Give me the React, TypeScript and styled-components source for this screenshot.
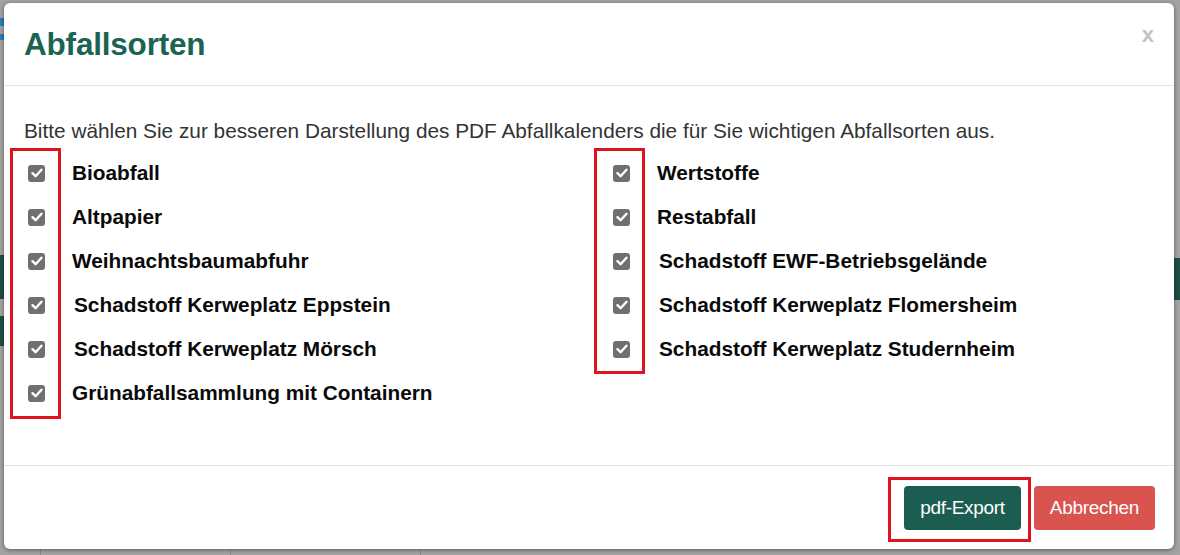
import React from "react";
import styled, { createGlobalStyle } from "styled-components";

const Global = createGlobalStyle`
  html, body { margin: 0; padding: 0; }
  body {
    width: 1180px;
    height: 555px;
    overflow: hidden;
    background: #a3a3a3;
    font-family: "Liberation Sans", Arial, sans-serif;
  }
`;

const Backdrop = styled.div`
  position: relative;
  width: 1180px;
  height: 555px;
  padding: 3px 6px 6px 4px;
  box-sizing: border-box;
`;

const BgBit = styled.div<{ $x: number; $y: number; $w: number; $h: number; $c: string }>`
  position: absolute;
  left: ${(p) => p.$x}px;
  top: ${(p) => p.$y}px;
  width: ${(p) => p.$w}px;
  height: ${(p) => p.$h}px;
  background: ${(p) => p.$c};
`;

const Modal = styled.div`
  position: relative;
  height: 546px;
  background: #fff;
  border-radius: 6px;
  box-shadow: 0 1px 4px rgba(0, 0, 0, 0.45);
  display: flex;
  flex-direction: column;
`;

const Header = styled.div`
  height: 83px;
  border-bottom: 1px solid #e3e3e3;
  display: flex;
  align-items: center;
  justify-content: space-between;
  padding: 0 20px 0 20px;
  box-sizing: border-box;
  flex: none;
`;

const Title = styled.h2`
  margin: 0;
  font-size: 31.5px;
  font-weight: bold;
  color: #1b6454;
  letter-spacing: -0.2px;
`;

const Close = styled.span`
  font-size: 22px;
  font-weight: bold;
  color: #c2c2c2;
  margin-top: -18px;
`;

const Body = styled.div`
  flex: 1;
  padding: 33px 20px 0 20px;
  box-sizing: border-box;
  border-bottom: 1px solid #e3e3e3;
`;

const Intro = styled.p`
  margin: 0 0 8px 0;
  font-size: 20.8px;
  line-height: 24px;
  color: #333;
`;

const Columns = styled.div`
  display: grid;
  grid-template-columns: 585px 1fr;
`;

const Column = styled.div`
  display: flex;
  flex-direction: column;
`;

const Row = styled.label`
  height: 44px;
  display: flex;
  align-items: center;
`;

const Box = styled.span`
  width: 17px;
  height: 17px;
  border-radius: 3px;
  background: #707070;
  display: flex;
  align-items: center;
  justify-content: center;
  flex: none;
  margin-left: 4px;
`;

const Label = styled.span<{ $shift?: boolean }>`
  margin-left: ${(p) => (p.$shift ? 29 : 27)}px;
  font-size: 20.8px;
  font-weight: bold;
  color: #0a0a0a;
`;

const Footer = styled.div`
  height: 83px;
  flex: none;
  display: flex;
  align-items: center;
  justify-content: flex-end;
  gap: 13px;
  padding: 0 19px 0 0;
  box-sizing: border-box;
`;

const Button = styled.button<{ $variant: "primary" | "danger" }>`
  height: 44px;
  border: none;
  border-radius: 4px;
  padding: 0 16px;
  font-family: "Liberation Sans", Arial, sans-serif;
  font-size: 19px;
  color: #fff;
  letter-spacing: -0.3px;
  background: ${(p) => (p.$variant === "primary" ? "#1b5e51" : "#d9534f")};
  margin-top: 1px;
`;

const Highlight = styled.div<{ $x: number; $y: number; $w: number; $h: number }>`
  position: absolute;
  left: ${(p) => p.$x}px;
  top: ${(p) => p.$y}px;
  width: ${(p) => p.$w}px;
  height: ${(p) => p.$h}px;
  border: 3px solid #e0141f;
  box-sizing: border-box;
  pointer-events: none;
`;

const Check = () => (
  <svg width="12" height="10" viewBox="0 0 12 10">
    <path d="M1.5 5.2 L4.6 8.2 L10.5 1.8" fill="none" stroke="#fff" strokeWidth="2.4" strokeLinecap="round" strokeLinejoin="round" />
  </svg>
);

const left = [
  { t: "Bioabfall" },
  { t: "Altpapier" },
  { t: "Weihnachtsbaumabfuhr" },
  { t: "Schadstoff Kerweplatz Eppstein", s: true },
  { t: "Schadstoff Kerweplatz Mörsch", s: true },
  { t: "Grünabfallsammlung mit Containern" },
];
const right = [
  { t: "Wertstoffe" },
  { t: "Restabfall" },
  { t: "Schadstoff EWF-Betriebsgelände", s: true },
  { t: "Schadstoff Kerweplatz Flomersheim", s: true },
  { t: "Schadstoff Kerweplatz Studernheim", s: true },
];

const Item = ({ t, s }: { t: string; s?: boolean }) => (
  <Row>
    <Box>
      <Check />
    </Box>
    <Label $shift={s}>{t}</Label>
  </Row>
);

export default function App() {
  return (
    <>
      <Global />
      <Backdrop>
        <BgBit $x={0} $y={18} $w={4} $h={8} $c="#2a7fc0" />
        <BgBit $x={0} $y={34} $w={4} $h={6} $c="#2a7fc0" />
        <BgBit $x={0} $y={255} $w={4} $h={44} $c="#1d4f45" />
        <BgBit $x={0} $y={316} $w={4} $h={30} $c="#1d4f45" />
        <BgBit $x={1174} $y={258} $w={6} $h={42} $c="#1d4f45" />
        <BgBit $x={40} $y={549} $w={1} $h={6} $c="#8a8a8a" />
        <BgBit $x={230} $y={549} $w={1} $h={6} $c="#8a8a8a" />
        <BgBit $x={420} $y={549} $w={1} $h={6} $c="#8a8a8a" />
        <Modal>
          <Header>
            <Title>Abfallsorten</Title>
            <Close>x</Close>
          </Header>
          <Body>
            <Intro>
              Bitte wählen Sie zur besseren Darstellung des PDF Abfallkalenders die für Sie wichtigen Abfallsorten aus.
            </Intro>
            <Columns>
              <Column>
                {left.map((i) => (
                  <Item key={i.t} t={i.t} s={i.s} />
                ))}
              </Column>
              <Column>
                {right.map((i) => (
                  <Item key={i.t} t={i.t} s={i.s} />
                ))}
              </Column>
            </Columns>
          </Body>
          <Footer>
            <Button $variant="primary">pdf-Export</Button>
            <Button $variant="danger">Abbrechen</Button>
          </Footer>
        </Modal>
        <Highlight $x={10} $y={148} $w={51} $h={271} />
        <Highlight $x={594} $y={148} $w={51} $h={226} />
        <Highlight $x={888} $y={477} $w={143} $h={65} />
      </Backdrop>
    </>
  );
}
